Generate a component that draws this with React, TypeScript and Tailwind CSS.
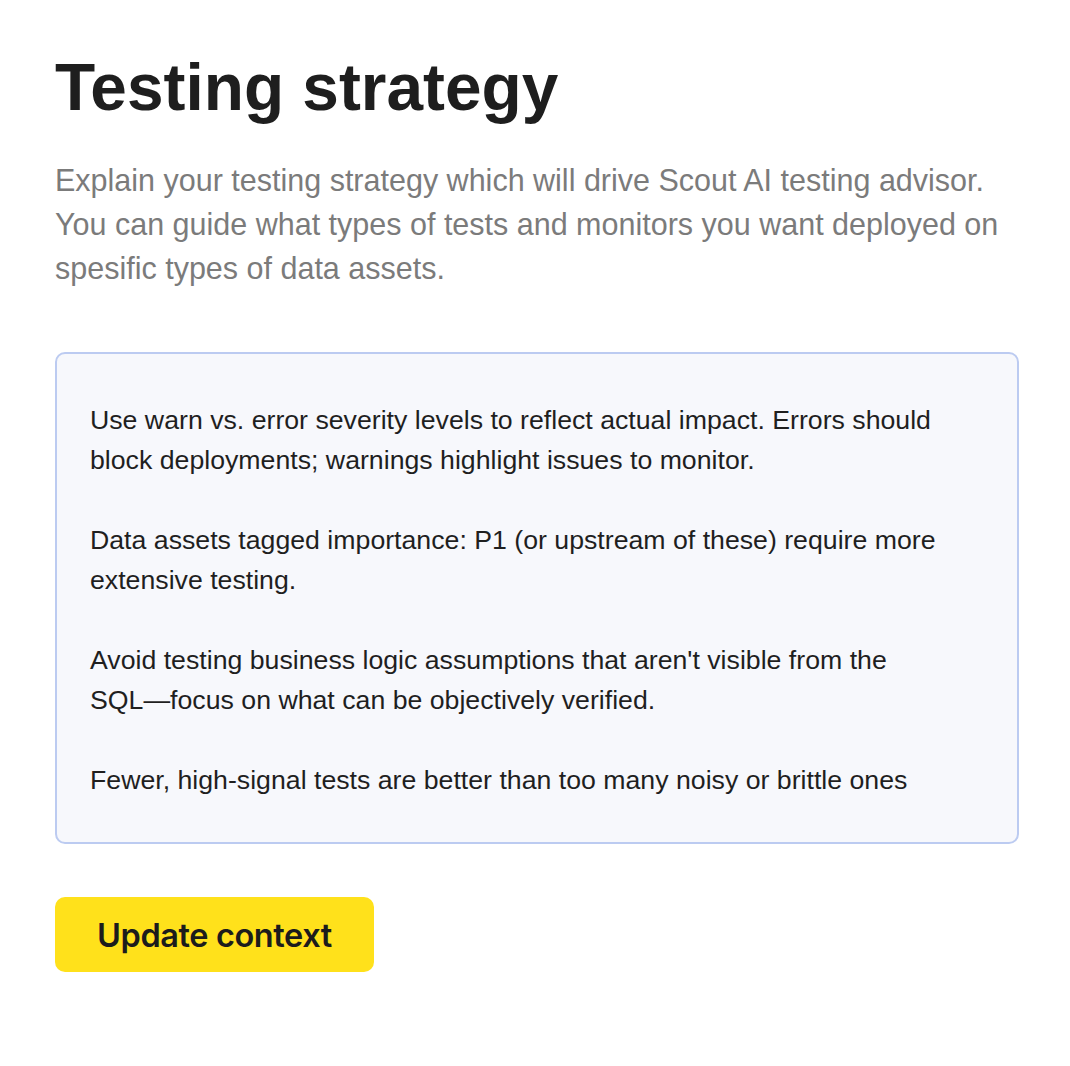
export default function App() {
  const notes = [
    'Use warn vs. error severity levels to reflect actual impact. Errors should block deployments; warnings highlight issues to monitor.',
    'Data assets tagged importance: P1 (or upstream of these) require more extensive testing.',
    null,
    'Fewer, high-signal tests are better than too many noisy or brittle ones',
  ];

  return (
    <div className="min-h-[1066px] bg-white pl-[55px] pr-[51px] pt-[50px] font-['Liberation_Sans',Arial,sans-serif]">
      <h1 className="text-[65.8px] font-bold leading-[74px] text-[#1e1e1e]">Testing strategy</h1>
      <p className="mt-[34px] text-[30.5px] leading-[44px] text-[#7b7b7b]">
        Explain your testing strategy which will drive Scout AI testing advisor. You can guide what types of tests and
        monitors you want deployed on spesific types of data assets.
      </p>
      <div className="mt-[62px] flex flex-col gap-[40px] rounded-[10px] border-2 border-[#bccbf1] bg-[#f7f8fc] pb-[42px] pl-[33px] pr-[60px] pt-[46px]">
        {notes.map((n, i) => (
          <p key={i} className="text-[26.7px] leading-[40px] text-[#1f1f1f]">
            {n ?? (
              <>
                Avoid testing business logic assumptions that aren't visible from the{' '}
                <span className="whitespace-nowrap">SQL&mdash;focus</span> on what can be objectively verified.
              </>
            )}
          </p>
        ))}
      </div>
      <button className="mt-[53px] flex h-[75px] w-[319px] items-center justify-center rounded-[10px] bg-[#ffe11b] pt-[4px] font-['Inter',sans-serif] text-[32.5px] font-semibold tracking-[-0.4px] text-[#1c1c1c]">
        Update context
      </button>
    </div>
  );
}
